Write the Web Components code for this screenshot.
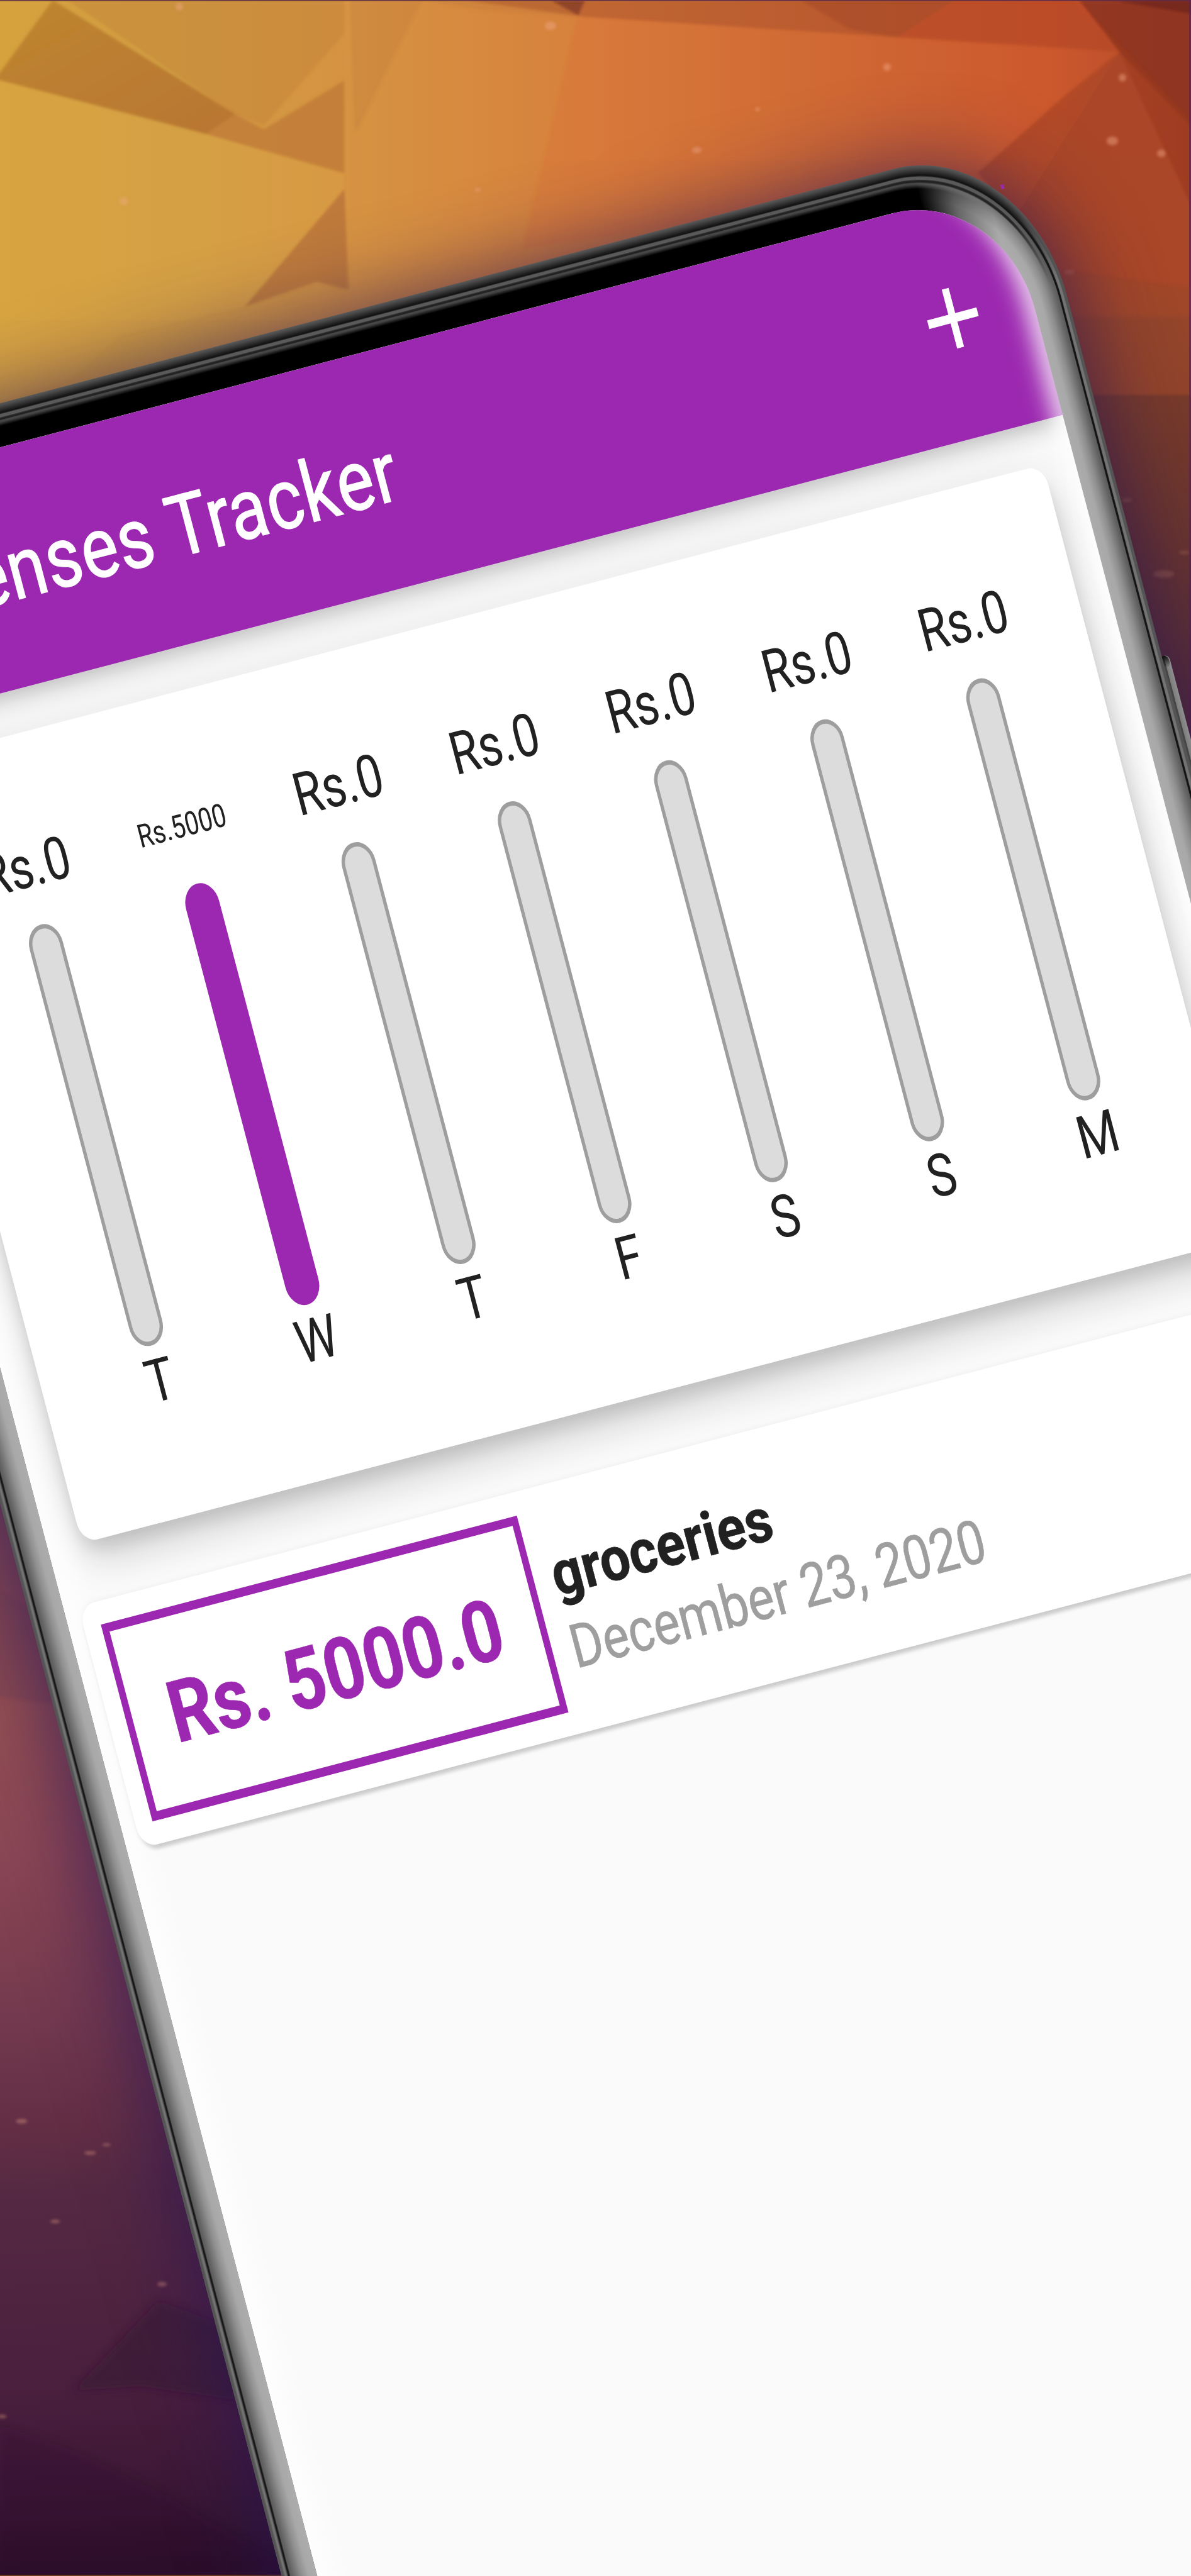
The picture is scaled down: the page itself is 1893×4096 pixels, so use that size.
<!DOCTYPE html>
<html lang="en">
<head>
<meta charset="utf-8">
<title>Expenses Tracker</title>
<style>
  html { font-size: 6.735px; }
  body { margin: 0; width: 1893px; height: 4096px; overflow: hidden; background: #5a2c42; font-family: Roboto, "Liberation Sans", sans-serif; }
</style>
</head>
<body>
<phone-scene>
  <poly-wallpaper slot="wallpaper"></poly-wallpaper>
  <phone-device slot="device">
    <app-bar>
      <fit-text slot="title" size="20" weight="400" ink="72" sample="Tracker" spacing=".15" stroke=".22">Expenses Tracker</fit-text>
      <add-icon slot="action"></add-icon>
    </app-bar>
    <week-chart>
      <chart-bar amount="Rs.0" day="T"></chart-bar>
      <chart-bar amount="Rs.5000" day="W" full></chart-bar>
      <chart-bar amount="Rs.0" day="T"></chart-bar>
      <chart-bar amount="Rs.0" day="F"></chart-bar>
      <chart-bar amount="Rs.0" day="S"></chart-bar>
      <chart-bar amount="Rs.0" day="S"></chart-bar>
      <chart-bar amount="Rs.0" day="M"></chart-bar>
    </week-chart>
    <expense-card>
      <fit-text slot="price" size="20.2" weight="700" ink="104" stroke=".1">Rs. 5000.0</fit-text>
      <fit-text slot="name" size="14.4" weight="700" ink="69.1" stroke=".1">groceries</fit-text>
      <fit-text slot="date" size="14.3" weight="400" ink="130.3" stroke=".1">December 23, 2020</fit-text>
    </expense-card>
  </phone-device>
</phone-scene>

<script>
const define = (name, html, setup) => customElements.define(name, class extends HTMLElement {
  connectedCallback() {
    if (this.shadowRoot) return;
    const root = this.attachShadow({ mode: 'open' });
    root.innerHTML = typeof html === 'function' ? html(this) : html;
    if (setup) setup(this, root);
  }
});

/* Text stretched horizontally until its inked width equals `ink` rem. */
define('fit-text', `
  <style>
    :host { display: inline-block; white-space: nowrap; text-align: left; }
    span { display: inline-block; transform-origin: 0 50%; text-rendering: geometricPrecision; }
  </style><span><slot></slot></span>`, (host, root) => {
  const size = parseFloat(host.getAttribute('size'));
  const weight = host.getAttribute('weight') || 400;
  const spacing = parseFloat(host.getAttribute('spacing') || 0);
  const text = host.textContent.trim();
  const ctx = document.createElement('canvas').getContext('2d');
  ctx.font = weight + ' 200px Roboto';
  ctx.letterSpacing = (spacing / size * 200) + 'px';
  const sample = host.getAttribute('sample') || text;
  const m = ctx.measureText(sample);
  const ink = (m.actualBoundingBoxLeft + m.actualBoundingBoxRight) * size / 200;
  const k = host.hasAttribute('ink') ? parseFloat(host.getAttribute('ink')) / ink : 1.04;
  const full = ctx.measureText(text).width * size / 200;
  const span = root.querySelector('span');
  span.style.fontSize = size + 'rem';
  span.style.fontWeight = weight;
  span.style.letterSpacing = spacing + 'rem';
  span.style.transform = 'scaleX(' + k + ')';
  if (host.hasAttribute('stroke')) span.style.webkitTextStroke = host.getAttribute('stroke') + 'rem currentColor';
  host.style.width = full * k + 'rem';
});

define('phone-scene', `
  <style>
    :host { display: block; width: 1893px; height: 4096px; overflow: hidden; }
    div { width: 2484px; height: 5376px; position: relative; overflow: hidden; transform: scale(.76208, .7619); transform-origin: 0 0; }
    ::slotted([slot=device]) { position: absolute; left: 0; top: 0; }
  </style>
  <div><slot name="wallpaper"></slot><slot name="device"></slot></div>`);

define('poly-wallpaper', () => {
  const dots = [[1148,54,12,9],[1850,140,8,8],[2341,162,8,8],[2320,294,12,9],[2422,320,9,8],[1453,313,10,7],[258,420,9,8],[374,14,8,8],[1580,228,5,4],[2230,568,11,5],[2350,1044,11,4],[2427,1198,22,8],[2470,1153,12,4],[45,4427,12,5],[188,4493,12,4],[222,4476,9,3],[115,4636,10,4],[338,4767,10,5],[4,5043,10,4],[996,396,6,4]];
  return `
  <style>:host { display: block; } svg { display: block; }</style>
  <svg width="2484" height="5376" viewBox="0 0 2484 5376">
    <defs>
      <linearGradient id="top" gradientUnits="userSpaceOnUse" x1="0" y1="0" x2="2484" y2="0">
        <stop offset="0" stop-color="#d6a23e"/><stop offset=".16" stop-color="#d19c43"/><stop offset=".3" stop-color="#d69242"/><stop offset=".5" stop-color="#d7803c"/>
        <stop offset=".7" stop-color="#cd6a34"/><stop offset=".88" stop-color="#c8552b"/><stop offset="1" stop-color="#a84428"/>
      </linearGradient>
      <linearGradient id="right" gradientUnits="userSpaceOnUse" x1="0" y1="300" x2="0" y2="1900">
        <stop offset="0" stop-color="#aa4729"/><stop offset=".22" stop-color="#a04729"/><stop offset=".23" stop-color="#94452a"/><stop offset=".325" stop-color="#92442a"/>
        <stop offset=".33" stop-color="#783b2a"/><stop offset=".5" stop-color="#6c362c"/><stop offset=".7" stop-color="#5a2f34"/><stop offset="1" stop-color="#4a2838"/>
      </linearGradient>
      <linearGradient id="low" gradientUnits="userSpaceOnUse" x1="0" y1="2800" x2="100" y2="5376">
        <stop offset="0" stop-color="#744052"/><stop offset=".12" stop-color="#7c4554"/><stop offset=".3" stop-color="#965052"/><stop offset=".42" stop-color="#8a4654"/><stop offset=".55" stop-color="#73394e"/>
        <stop offset=".64" stop-color="#622e44"/><stop offset=".69" stop-color="#552943"/><stop offset=".85" stop-color="#4a1f3e"/><stop offset=".94" stop-color="#3a1734"/><stop offset="1" stop-color="#2c1029"/>
      </linearGradient>
      <linearGradient id="tri" x1="0" y1="0" x2="1" y2="1"><stop offset="0" stop-color="#bf862f"/><stop offset="1" stop-color="#b87632"/></linearGradient>
      <filter id="soft"><feGaussianBlur stdDeviation="3"/></filter>
      <filter id="haze"><feGaussianBlur stdDeviation="9"/></filter>
    </defs>
    <rect width="2484" height="2000" fill="url(#top)"/>
    <rect y="2000" width="2484" height="3376" fill="url(#low)"/>
    <path d="M2335 108L2484 420V2000H1900V800Z" fill="url(#right)"/>
    <g filter="url(#soft)">
      <path d="M-10 165L110 0L490 238L430 280L-10 165Z" fill="url(#tri)"/>
      <path d="M140 0H718V70L550 262L490 238Z" fill="#c18136" opacity=".42"/>
      <path d="M490 238L550 270L718 168V362L430 280Z" fill="#bb7434" opacity=".65"/>
      <path d="M-10 165L430 280L718 362L715 395L510 640L250 700L150 790L-10 840Z" fill="#dda944" opacity=".3"/>
      <path d="M718 395L728 605L660 588L510 640Z" fill="#b06a35" opacity=".62"/>
      <path d="M718 0H730V640H722Z" fill="#e09a48" opacity=".15"/>
      <path d="M970 0L1220 35L2335 108L2240 0Z" fill="#a84a2a" opacity=".5"/>
      <path d="M730 0L1190 0L1195 34L1000 20L880 0L740 280Z" fill="#b77038" opacity=".22"/>
      <path d="M1148 0H1220L1206 32Z" fill="#843f28" opacity=".8"/>
      <path d="M1670 0H1990L1870 78L1770 60Z" fill="#9f4626" opacity=".45"/>
      <path d="M1990 0H2250L2335 108L1870 78Z" fill="#c04a28" opacity=".5"/>
      <path d="M1205 34L2335 108L2110 340L1750 420L1090 520Z" fill="#d9642c" opacity=".22"/>
      <path d="M2335 108L2220 200L2040 360L2200 560L2484 600V420Z" fill="#ab4527" opacity=".75"/>
      <path d="M2250 0H2490V270L2335 108Z" fill="#8b321f" opacity=".85"/>
      <path d="M2320 0H2490V30Z" fill="#6e241a" opacity=".7"/>
      <path d="M2335 108L2250 0L2484 250V430Z" fill="#98381f" opacity=".6"/>
      <path d="M0 3320L90 3370L160 3560L-10 3540Z" fill="#70384c" opacity=".25"/>
    </g>
    <g filter="url(#haze)">
      <path d="M330 4800L150 4990L290 4980L500 5010L600 4900Z" fill="#30102c" opacity=".42"/>
      <path d="M0 5060L140 5110L330 5200L640 5376H-10Z" fill="#2c0f2e" opacity=".18"/>
    </g>
    <g filter="url(#soft)">${dots.map(d => `<ellipse cx="${d[0]}" cy="${d[1]}" rx="${d[2]}" ry="${d[3]}" fill="#f2a888" opacity="${d[1] > 4000 ? .36 : d[1] > 500 ? .2 : .45}"/>`).join('')}</g>
    <path d="M0 1H2484" stroke="#5a2a48" stroke-width="3" opacity=".8"/>
    <path d="M2482 0V1700" stroke="#5a2450" stroke-width="4" opacity=".7"/>
    <path d="M0 5375H700" stroke="#6a3c22" stroke-width="3"/>
  </svg>`;
});

/* Device body: rings of rounded rectangles from the outer edge to the glass.
   Each ring is lit differently along the top and along the sides. */
const level = (stops, t) => {
  let i = 1;
  while (i < stops.length - 1 && stops[i][0] < t) i++;
  const [a, ca] = stops[i - 1], [b, cb] = stops[i];
  const f = Math.max(0, Math.min(1, (t - a) / (b - a || 1)));
  return Math.round(ca + (cb - ca) * f);
};
const grey = c => `rgb(${c},${c},${c})`;
const TOP = [[0,88],[.06,72],[.22,17],[.235,30],[.25,88],[.31,92],[.33,40],[.37,32],[.39,72],[.42,70],[.52,0],[1,0]];
const SIDE = [[0,84],[.07,84],[.1,118],[.16,112],[.175,22],[.22,18],[.235,92],[.3,98],[.55,142],[.76,168],[1,172]];
const rings = () => {
  let defs = '', shapes = '';
  const n = 92;
  for (let i = 0; i < n; i++) {
    const t = i / n, l = -796 + 72 * t, r = 1996 - 72 * t, top = 814 + 88.5 * t;
    const rx = 283 - 46 * t, ry = 348 - 80 * t;
    const a = level(TOP, t), b = level(SIDE, t);
    const [axis, mid] = t < .4
      ? ['x1="1840" y1="860" x2="1985" y2="1120"', a]
      : ['x1="1750" y1="0" x2="1890" y2="0"', Math.round(a * .4 + b * .6)];
    defs += `<linearGradient id="r${i}" gradientUnits="userSpaceOnUse" ${axis}><stop offset="0" stop-color="${grey(a)}"/><stop offset=".5" stop-color="${grey(mid)}"/><stop offset="1" stop-color="${grey(b)}"/></linearGradient>`;
    shapes += `<path fill="url(#r${i})" d="M${l} 7000V${top}H${r - rx}A${rx} ${ry} 0 0 1 ${r} ${top + ry}V7000Z"/>`;
  }
  /* Left flank: same profile, always side-lit. */
  let left = '';
  for (let k = 0; k <= 36; k++) left += `<stop offset="${k / 36}" stop-color="${grey(level(SIDE, k / 36))}"/>`;
  defs += `<linearGradient id="left">${left}</linearGradient>`;
  shapes += `<rect x="-796" y="1400" width="72" height="5600" fill="url(#left)"/>`;
  return `<defs>${defs}
    <linearGradient id="key"><stop offset="0" stop-color="#4e4e4e"/><stop offset=".55" stop-color="#454545"/><stop offset=".6" stop-color="#7d7d7d"/><stop offset="1" stop-color="#8f8f8f"/></linearGradient>
    <linearGradient id="keytop" x1="0" y1="0" x2="0" y2="1"><stop offset="0" stop-color="#0c0c0c"/><stop offset="1" stop-color="#0c0c0c" stop-opacity="0"/></linearGradient></defs>
    <path d="M1920 903H1927V912H1920Z" fill="#9c27b0"/>
    <rect x="1985" y="1940" width="26" height="600" rx="9" ry="12" fill="url(#key)"/>
    <rect x="1985" y="1940" width="24" height="26" rx="9" ry="12" fill="url(#keytop)"/>${shapes}`;
};

define('phone-device', () => `
  <style>
    :host { display: block; width: 0; height: 0; transform: rotate(-14.7deg); transform-origin: 0 0; }
    .glow { position: absolute; left: -780px; top: 838px; width: 2765px; height: 6000px; border-radius: 270px / 320px; box-shadow: 0 0 175px 18px rgba(38,20,84,.76); }
    .body { position: absolute; left: 0; top: 0; overflow: visible; }
    .screen { position: absolute; left: -724px; top: 902.5px; width: 2648px; height: 5600px; overflow: hidden; border-radius: 237px / 268px; background: #fafafa; }
    .app { width: 2648px; transform: scaleY(1.3185); transform-origin: 0 0; }
    .sheen { position: absolute; inset: 0; pointer-events: none;
      background: linear-gradient(90deg, rgba(255,255,255,.75), rgba(255,255,255,.5) 28px, rgba(255,255,255,.12) 56px, rgba(255,255,255,0) 68px); }
    .edge { position: absolute; left: -300px; right: 0; top: -72px; bottom: 0; border-radius: 0 237px 0 0 / 0 340px 0 0;
      box-shadow: inset -8px 0 36px 8px rgba(255,255,255,.5), inset -26px 0 56px -6px rgba(255,255,255,.5); }
  </style>
  <div class="glow"></div>
  <svg class="body" width="1" height="1">${rings()}</svg>
  <div class="screen"><div class="app"><slot></slot></div><div class="sheen"></div><div class="edge"></div></div>`);

define('app-bar', `
  <style>
    :host { display: flex; align-items: center; position: relative; z-index: 1; height: 56rem; background: #9c27b0; color: #fff;
      box-shadow: 0 2rem 4rem -1rem rgba(0,0,0,.12), 0 4rem 5rem rgba(0,0,0,.07), 0 1rem 10rem rgba(0,0,0,.08); }
    .title { width: 189.6rem; display: flex; justify-content: flex-end; padding-top: 1.6rem; }
    .action { margin-left: auto; padding-right: 13.2rem; padding-bottom: 1rem; }
  </style>
  <div class="title"><slot name="title"></slot></div><div class="action"><slot name="action"></slot></div>`);

define('add-icon', `
  <style>:host { display: block; } svg { display: block; width: 24rem; height: 24rem; }</style>
  <svg viewBox="0 0 24 24" fill="#fff"><path d="M4.1 10.95H10.9V4.85H13.1V10.95H19.9V13.05H13.1V19.15H10.9V13.05H4.1Z"/></svg>`);

define('week-chart', `
  <style>
    :host { display: flex; justify-content: center; box-sizing: border-box; width: 372.7rem; height: 187.95rem; margin: 10.1rem 0 0 10.7rem; padding-top: 20.7rem;
      background: #fff; border-radius: 5rem; color: #212121;
      box-shadow: 0 3rem 5rem -1rem rgba(0,0,0,.13), 0 6rem 10rem rgba(0,0,0,.1), 0 1rem 16rem rgba(0,0,0,.09); }
  </style><slot></slot>`);

define('chart-bar', host => {
  const full = host.hasAttribute('full');
  return `
  <style>
    :host { display: flex; flex-direction: column; align-items: center; width: 50.02rem; }
    .amount { box-sizing: border-box; height: 20rem; display: flex; align-items: center; margin-bottom: 4.17rem; padding-top: .6rem; }
    .bar { box-sizing: border-box; width: 10.5rem; height: 102.2rem; border-radius: 5.25rem; border: 7px solid #9e9e9e; background: #dcdcdc; }
    .bar.full { border-color: #9c27b0; background: #9c27b0; }
    .day { height: 17.4rem; display: flex; align-items: center; }
  </style>
  <div class="amount"><fit-text size="${full ? 7.6 : 14}" ink="${full ? 27 : 26.1}">${host.getAttribute('amount')}</fit-text></div>
  <div class="bar${full ? ' full' : ''}"></div>
  <div class="day"><fit-text size="14">${host.getAttribute('day')}</fit-text></div>`;
});

define('expense-card', `
  <style>
    :host { display: flex; align-items: center; box-sizing: border-box; width: 384.7rem; height: 58.8rem; margin: 14.1rem 0 0 4.6rem; padding-left: 5.3rem;
      background: #fff; border-radius: 5rem;
      box-shadow: 0 1rem 1rem rgba(0,0,0,.11), 0 2rem 1rem -1rem rgba(0,0,0,.08), 0 0 2rem rgba(0,0,0,.06); }
    .price { box-sizing: border-box; display: flex; align-items: center; justify-content: center; width: 133.3rem; height: 47.8rem; padding-top: 1.7rem; border: 14px solid #9c27b0; color: #9c27b0; }
    .about { margin-left: 5.8rem; padding-top: 1.4rem; display: flex; flex-direction: column; }
    .row { height: 17.7rem; display: flex; align-items: center; color: #212121; }
    .row + .row { color: #9e9e9e; }
  </style>
  <div class="price"><slot name="price"></slot></div>
  <div class="about"><div class="row"><slot name="name"></slot></div><div class="row"><slot name="date"></slot></div></div>`);
</script>
</body>
</html>
